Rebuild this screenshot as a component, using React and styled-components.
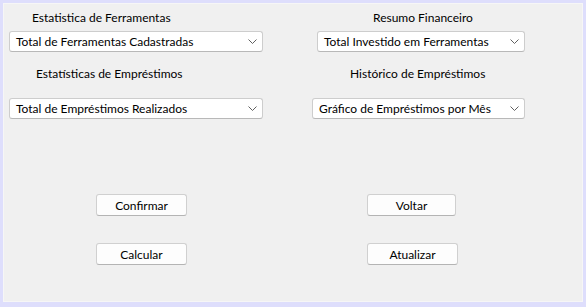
import React from "react";
import styled, { createGlobalStyle } from "styled-components";

const GlobalStyle = createGlobalStyle`
  html, body {
    margin: 0;
    padding: 0;
    background: #dedefc;
  }
  * {
    box-sizing: border-box;
  }
`;

const Window = styled.div`
  width: 586px;
  height: 307px;
  padding: 3px 3px 5px 3px;
  background: #dedefc;
`;

const Panel = styled.div`
  height: 100%;
  background: #f0f0f0;
  border: 1px solid #f6f6f6;
  padding: 5px 0 0 5px;
  font-family: "Lato", "Noto Sans", sans-serif;
  font-size: 12px;
  color: #000;
`;

const Columns = styled.div`
  display: grid;
  grid-template-columns: 254px 214px;
  column-gap: 48px;
`;

const Column = styled.div`
  display: flex;
  flex-direction: column;
  align-items: flex-start;
`;

const Label = styled.div`
  height: 16px;
  line-height: 17px;
  white-space: nowrap;
  margin-left: ${(p) => p.$indent}px;
  margin-top: ${(p) => p.$top || 0}px;
`;

const Combo = styled.div`
  position: relative;
  display: flex;
  align-items: center;
  width: ${(p) => p.$width}px;
  height: 21px;
  margin-left: ${(p) => p.$indent || 0}px;
  margin-top: ${(p) => p.$top}px;
  padding-left: 6px;
  background: #fff;
  border: 1px solid #cdcdcd;
  border-bottom-color: #b8b8b8;
  border-radius: 3px;
  white-space: nowrap;
`;

const Chevron = styled.svg`
  position: absolute;
  right: 5px;
  top: 7px;
`;

const Button = styled.div`
  display: flex;
  align-items: center;
  justify-content: center;
  width: ${(p) => p.$width}px;
  height: 22px;
  margin-left: ${(p) => p.$indent}px;
  margin-top: ${(p) => p.$top}px;
  background: #fdfdfd;
  border: 1px solid #d0d0d0;
  border-bottom-color: #b4b4b4;
  border-radius: 3px;
`;

const Select = ({ children, width, indent, top }) => (
  <Combo $width={width} $indent={indent} $top={top}>
    {children}
    <Chevron width="9" height="5" viewBox="0 0 9 5">
      <path d="M0.5 0.5 L4.5 4.5 L8.5 0.5" fill="none" stroke="#606060" strokeWidth="1" />
    </Chevron>
  </Combo>
);

export default function App() {
  return (
    <>
      <GlobalStyle />
      <Window>
        <Panel>
          <Columns>
            <Column>
              <Label $indent={23}>Estatistica de Ferramentas</Label>
              <Select width={254} top={6}>Total de Ferramentas Cadastradas</Select>
              <Label $indent={27} $top={13}>Estatísticas de Empréstimos</Label>
              <Select width={254} top={17}>Total de Empréstimos Realizados</Select>
              <Button $width={91} $indent={87} $top={75}>Confirmar</Button>
              <Button $width={91} $indent={87} $top={27}>Calcular</Button>
            </Column>
            <Column>
              <Label $indent={62}>Resumo Financeiro</Label>
              <Select width={208} indent={6} top={6}>Total Investido em Ferramentas</Select>
              <Label $indent={39} $top={13}>Histórico de Empréstimos</Label>
              <Select width={213} indent={1} top={17}>Gráfico de Empréstimos por Mês</Select>
              <Button $width={89} $indent={56} $top={75}>Voltar</Button>
              <Button $width={91} $indent={56} $top={27}>Atualizar</Button>
            </Column>
          </Columns>
        </Panel>
      </Window>
    </>
  );
}
